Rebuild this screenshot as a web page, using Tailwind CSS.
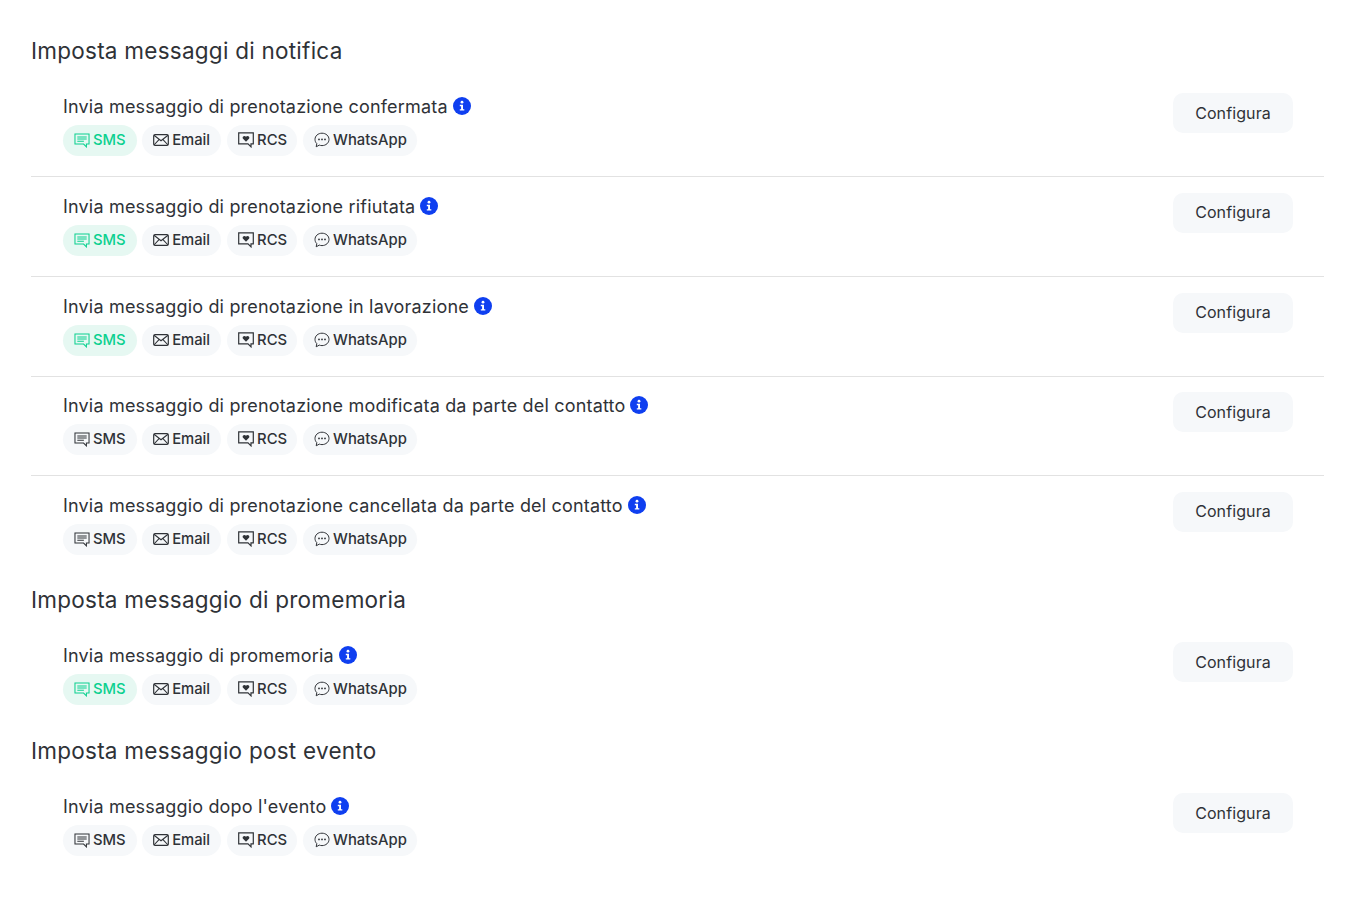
<!DOCTYPE html>
<html lang="it"><head><meta charset="utf-8"><title>Messaggi</title>
<script src="https://cdn.jsdelivr.net/npm/@tailwindcss/browser@4"></script></head>
<body class="bg-white font-['Inter','Liberation_Sans',sans-serif] text-[#2f3237] h-[908px] overflow-hidden">
<svg width="0" height="0" class="absolute">
<symbol id="i-sms" viewBox="0 0 17 16"><path d="M1 1h15v10.800h-2.800v3l-3-3H1z" fill="none" stroke="currentColor" stroke-width="1.100"/><path d="M3.500 4.200h10M3.500 6.500h10M3.500 8.900h7" fill="none" stroke="currentColor" stroke-width="1.100"/></symbol>
<symbol id="i-mail" viewBox="0 0 16 12"><rect x=".7" y=".7" width="14.600" height="10.600" rx="1.400" fill="none" stroke="currentColor" stroke-width="1.200"/><path d="M1 1.200l7 5.600 7-5.600M1 11l5-5.400M15 11l-5-5.400" fill="none" stroke="currentColor" stroke-width="1.100"/></symbol>
<symbol id="i-rcs" viewBox="0 0 16 16"><path d="M.7.800h14.600v11h-2.300v3l-3-3H.7z" fill="none" stroke="currentColor" stroke-width="1.200"/><path d="M8 9.800L4.800 6.500C3.900 4.800 6.500 3 8 4.800c1.500-1.800 4.100 0 3.200 1.700z" fill="currentColor"/></symbol>
<symbol id="i-wa" viewBox="0 0 16 16"><path d="M8 1.200c3.900 0 7 2.700 7 6.200s-3.100 6.200-7 6.200c-1 0-1.900-.2-2.700-.5L2.200 14.800l.6-3.200C1.600 10.500 1 9 1 7.400 1 3.900 4.100 1.200 8 1.200z" fill="none" stroke="currentColor" stroke-width="1"/><circle cx="5" cy="7.400" r=".9" fill="currentColor"/><circle cx="8" cy="7.400" r=".9" fill="currentColor"/><circle cx="11" cy="7.400" r=".9" fill="currentColor"/></symbol>
<symbol id="i-info" viewBox="0 0 18 18"><circle cx="9" cy="9" r="9" fill="#0f3ff0"/><circle cx="9" cy="5.200" r="1.400" fill="#fff"/><path d="M6.800 7.800h3.200v4.400h1.300v1.400H6.800v-1.400h1.300V9.200H6.800z" fill="#fff"/></symbol>
</svg>
<main class="ml-[31px] mr-[21px] pt-[35px]">

<section>
<h2 class="text-[22.500px] leading-[32px] h-[42px] tracking-[0.25px]">Imposta messaggi di notifica</h2>
<div class="flex justify-between border-b border-[#e2e2e2] h-[100px] pl-8 pr-[31px] pt-4">
 <div class="pt-px">
  <div class="flex items-center gap-[5px] text-[18px] leading-[26px] tracking-[0.18px]">Invia messaggio di prenotazione confermata<svg class="w-[18px] h-[18px] -mt-[2px]"><use href="#i-info"/></svg></div>
  <div class="flex gap-[5.500px] mt-[5px]">
   <span class="flex items-center gap-[3px] h-[31px] px-[11px] rounded-full text-[14.800px] font-medium bg-[#e6f8f2] text-[#0bd08f]"><svg class="w-[16px] h-[15px] -mt-[1px]"><use href="#i-sms"/></svg>SMS</span>
   <span class="flex items-center gap-[3px] h-[31px] px-[11px] rounded-full text-[14.800px] font-medium bg-[#f6f8fa]"><svg class="w-[16px] h-[12px] -mt-[2px]"><use href="#i-mail"/></svg>Email</span>
   <span class="flex items-center gap-[3.500px] h-[31px] pl-[11px] pr-[10px] rounded-full text-[14.800px] font-medium bg-[#f6f8fa]"><svg class="w-[16px] h-[16px] -mt-[2px]"><use href="#i-rcs"/></svg>RCS</span>
   <span class="flex items-center gap-[3.500px] h-[31px] pl-[11px] pr-[10px] rounded-full text-[14.800px] font-medium bg-[#f6f8fa]"><svg class="w-[16px] h-[16px] -mt-[2px]"><use href="#i-wa"/></svg>WhatsApp</span>
  </div>
 </div>
 <button class="w-[120px] h-[40px] rounded-[10px] bg-[#f6f8fa] text-[16px] tracking-[0.1px] leading-none">Configura</button>
</div>
<div class="flex justify-between border-b border-[#e2e2e2] h-[100px] pl-8 pr-[31px] pt-4">
 <div class="pt-px">
  <div class="flex items-center gap-[5px] text-[18px] leading-[26px] tracking-[0.18px]">Invia messaggio di prenotazione rifiutata<svg class="w-[18px] h-[18px] -mt-[2px]"><use href="#i-info"/></svg></div>
  <div class="flex gap-[5.500px] mt-[5px]">
   <span class="flex items-center gap-[3px] h-[31px] px-[11px] rounded-full text-[14.800px] font-medium bg-[#e6f8f2] text-[#0bd08f]"><svg class="w-[16px] h-[15px] -mt-[1px]"><use href="#i-sms"/></svg>SMS</span>
   <span class="flex items-center gap-[3px] h-[31px] px-[11px] rounded-full text-[14.800px] font-medium bg-[#f6f8fa]"><svg class="w-[16px] h-[12px] -mt-[2px]"><use href="#i-mail"/></svg>Email</span>
   <span class="flex items-center gap-[3.500px] h-[31px] pl-[11px] pr-[10px] rounded-full text-[14.800px] font-medium bg-[#f6f8fa]"><svg class="w-[16px] h-[16px] -mt-[2px]"><use href="#i-rcs"/></svg>RCS</span>
   <span class="flex items-center gap-[3.500px] h-[31px] pl-[11px] pr-[10px] rounded-full text-[14.800px] font-medium bg-[#f6f8fa]"><svg class="w-[16px] h-[16px] -mt-[2px]"><use href="#i-wa"/></svg>WhatsApp</span>
  </div>
 </div>
 <button class="w-[120px] h-[40px] pb-[2px] rounded-[10px] bg-[#f6f8fa] text-[16px] tracking-[0.1px] leading-none">Configura</button>
</div>
<div class="flex justify-between border-b border-[#e2e2e2] h-[100px] pl-8 pr-[31px] pt-4">
 <div class="pt-px">
  <div class="flex items-center gap-[5px] text-[18px] leading-[26px] tracking-[0.18px]">Invia messaggio di prenotazione in lavorazione<svg class="w-[18px] h-[18px] -mt-[2px]"><use href="#i-info"/></svg></div>
  <div class="flex gap-[5.500px] mt-[5px]">
   <span class="flex items-center gap-[3px] h-[31px] px-[11px] rounded-full text-[14.800px] font-medium bg-[#e6f8f2] text-[#0bd08f]"><svg class="w-[16px] h-[15px] -mt-[1px]"><use href="#i-sms"/></svg>SMS</span>
   <span class="flex items-center gap-[3px] h-[31px] px-[11px] rounded-full text-[14.800px] font-medium bg-[#f6f8fa]"><svg class="w-[16px] h-[12px] -mt-[2px]"><use href="#i-mail"/></svg>Email</span>
   <span class="flex items-center gap-[3.500px] h-[31px] pl-[11px] pr-[10px] rounded-full text-[14.800px] font-medium bg-[#f6f8fa]"><svg class="w-[16px] h-[16px] -mt-[2px]"><use href="#i-rcs"/></svg>RCS</span>
   <span class="flex items-center gap-[3.500px] h-[31px] pl-[11px] pr-[10px] rounded-full text-[14.800px] font-medium bg-[#f6f8fa]"><svg class="w-[16px] h-[16px] -mt-[2px]"><use href="#i-wa"/></svg>WhatsApp</span>
  </div>
 </div>
 <button class="w-[120px] h-[40px] pb-[2px] rounded-[10px] bg-[#f6f8fa] text-[16px] tracking-[0.1px] leading-none">Configura</button>
</div>
<div class="flex justify-between border-b border-[#e2e2e2] h-[99px] pl-8 pr-[31px] pt-[15px]">
 <div class="pt-px">
  <div class="flex items-center gap-[5px] text-[18px] leading-[26px] tracking-[0.18px]">Invia messaggio di prenotazione modificata da parte del contatto<svg class="w-[18px] h-[18px] -mt-[2px]"><use href="#i-info"/></svg></div>
  <div class="flex gap-[5.500px] mt-[5px]">
   <span class="flex items-center gap-[3px] h-[31px] px-[11px] rounded-full text-[14.800px] font-medium bg-[#f6f8fa]"><svg class="w-[16px] h-[15px] -mt-[1px]"><use href="#i-sms"/></svg>SMS</span>
   <span class="flex items-center gap-[3px] h-[31px] px-[11px] rounded-full text-[14.800px] font-medium bg-[#f6f8fa]"><svg class="w-[16px] h-[12px] -mt-[2px]"><use href="#i-mail"/></svg>Email</span>
   <span class="flex items-center gap-[3.500px] h-[31px] pl-[11px] pr-[10px] rounded-full text-[14.800px] font-medium bg-[#f6f8fa]"><svg class="w-[16px] h-[16px] -mt-[2px]"><use href="#i-rcs"/></svg>RCS</span>
   <span class="flex items-center gap-[3.500px] h-[31px] pl-[11px] pr-[10px] rounded-full text-[14.800px] font-medium bg-[#f6f8fa]"><svg class="w-[16px] h-[16px] -mt-[2px]"><use href="#i-wa"/></svg>WhatsApp</span>
  </div>
 </div>
 <button class="w-[120px] h-[40px] rounded-[10px] bg-[#f6f8fa] text-[16px] tracking-[0.1px] leading-none">Configura</button>
</div>
<div class="flex justify-between h-[90px] pl-8 pr-[31px] pt-4">
 <div class="pt-px">
  <div class="flex items-center gap-[5px] text-[18px] leading-[26px] tracking-[0.18px]">Invia messaggio di prenotazione cancellata da parte del contatto<svg class="w-[18px] h-[18px] -mt-[2px]"><use href="#i-info"/></svg></div>
  <div class="flex gap-[5.500px] mt-[5px]">
   <span class="flex items-center gap-[3px] h-[31px] px-[11px] rounded-full text-[14.800px] font-medium bg-[#f6f8fa]"><svg class="w-[16px] h-[15px] -mt-[1px]"><use href="#i-sms"/></svg>SMS</span>
   <span class="flex items-center gap-[3px] h-[31px] px-[11px] rounded-full text-[14.800px] font-medium bg-[#f6f8fa]"><svg class="w-[16px] h-[12px] -mt-[2px]"><use href="#i-mail"/></svg>Email</span>
   <span class="flex items-center gap-[3.500px] h-[31px] pl-[11px] pr-[10px] rounded-full text-[14.800px] font-medium bg-[#f6f8fa]"><svg class="w-[16px] h-[16px] -mt-[2px]"><use href="#i-rcs"/></svg>RCS</span>
   <span class="flex items-center gap-[3.500px] h-[31px] pl-[11px] pr-[10px] rounded-full text-[14.800px] font-medium bg-[#f6f8fa]"><svg class="w-[16px] h-[16px] -mt-[2px]"><use href="#i-wa"/></svg>WhatsApp</span>
  </div>
 </div>
 <button class="w-[120px] h-[40px] pb-[2px] rounded-[10px] bg-[#f6f8fa] text-[16px] tracking-[0.1px] leading-none">Configura</button>
</div>
</section>

<section class="mt-[18px]">
<h2 class="text-[22.500px] leading-[32px] h-[42px] tracking-[0.25px]">Imposta messaggio di promemoria</h2>
<div class="flex justify-between h-[93px] pl-8 pr-[31px] pt-4">
 <div class="pt-px">
  <div class="flex items-center gap-[5px] text-[18px] leading-[26px] tracking-[0.18px]">Invia messaggio di promemoria<svg class="w-[18px] h-[18px] -mt-[2px]"><use href="#i-info"/></svg></div>
  <div class="flex gap-[5.500px] mt-[5px]">
   <span class="flex items-center gap-[3px] h-[31px] px-[11px] rounded-full text-[14.800px] font-medium bg-[#e6f8f2] text-[#0bd08f]"><svg class="w-[16px] h-[15px] -mt-[1px]"><use href="#i-sms"/></svg>SMS</span>
   <span class="flex items-center gap-[3px] h-[31px] px-[11px] rounded-full text-[14.800px] font-medium bg-[#f6f8fa]"><svg class="w-[16px] h-[12px] -mt-[2px]"><use href="#i-mail"/></svg>Email</span>
   <span class="flex items-center gap-[3.500px] h-[31px] pl-[11px] pr-[10px] rounded-full text-[14.800px] font-medium bg-[#f6f8fa]"><svg class="w-[16px] h-[16px] -mt-[2px]"><use href="#i-rcs"/></svg>RCS</span>
   <span class="flex items-center gap-[3.500px] h-[31px] pl-[11px] pr-[10px] rounded-full text-[14.800px] font-medium bg-[#f6f8fa]"><svg class="w-[16px] h-[16px] -mt-[2px]"><use href="#i-wa"/></svg>WhatsApp</span>
  </div>
 </div>
 <button class="w-[120px] h-[40px] rounded-[10px] bg-[#f6f8fa] text-[16px] tracking-[0.1px] leading-none">Configura</button>
</div>
</section>

<section class="mt-[16px]">
<h2 class="text-[22.500px] leading-[32px] h-[42px] tracking-[0.25px]">Imposta messaggio post evento</h2>
<div class="flex justify-between h-[93px] pl-8 pr-[31px] pt-4">
 <div class="pt-px">
  <div class="flex items-center gap-[5px] text-[18px] leading-[26px] tracking-[0.18px]">Invia messaggio dopo l'evento<svg class="w-[18px] h-[18px] -mt-[2px]"><use href="#i-info"/></svg></div>
  <div class="flex gap-[5.500px] mt-[5px]">
   <span class="flex items-center gap-[3px] h-[31px] px-[11px] rounded-full text-[14.800px] font-medium bg-[#f6f8fa]"><svg class="w-[16px] h-[15px] -mt-[1px]"><use href="#i-sms"/></svg>SMS</span>
   <span class="flex items-center gap-[3px] h-[31px] px-[11px] rounded-full text-[14.800px] font-medium bg-[#f6f8fa]"><svg class="w-[16px] h-[12px] -mt-[2px]"><use href="#i-mail"/></svg>Email</span>
   <span class="flex items-center gap-[3.500px] h-[31px] pl-[11px] pr-[10px] rounded-full text-[14.800px] font-medium bg-[#f6f8fa]"><svg class="w-[16px] h-[16px] -mt-[2px]"><use href="#i-rcs"/></svg>RCS</span>
   <span class="flex items-center gap-[3.500px] h-[31px] pl-[11px] pr-[10px] rounded-full text-[14.800px] font-medium bg-[#f6f8fa]"><svg class="w-[16px] h-[16px] -mt-[2px]"><use href="#i-wa"/></svg>WhatsApp</span>
  </div>
 </div>
 <button class="w-[120px] h-[40px] rounded-[10px] bg-[#f6f8fa] text-[16px] tracking-[0.1px] leading-none">Configura</button>
</div>
</section>
</main>
</body></html>
